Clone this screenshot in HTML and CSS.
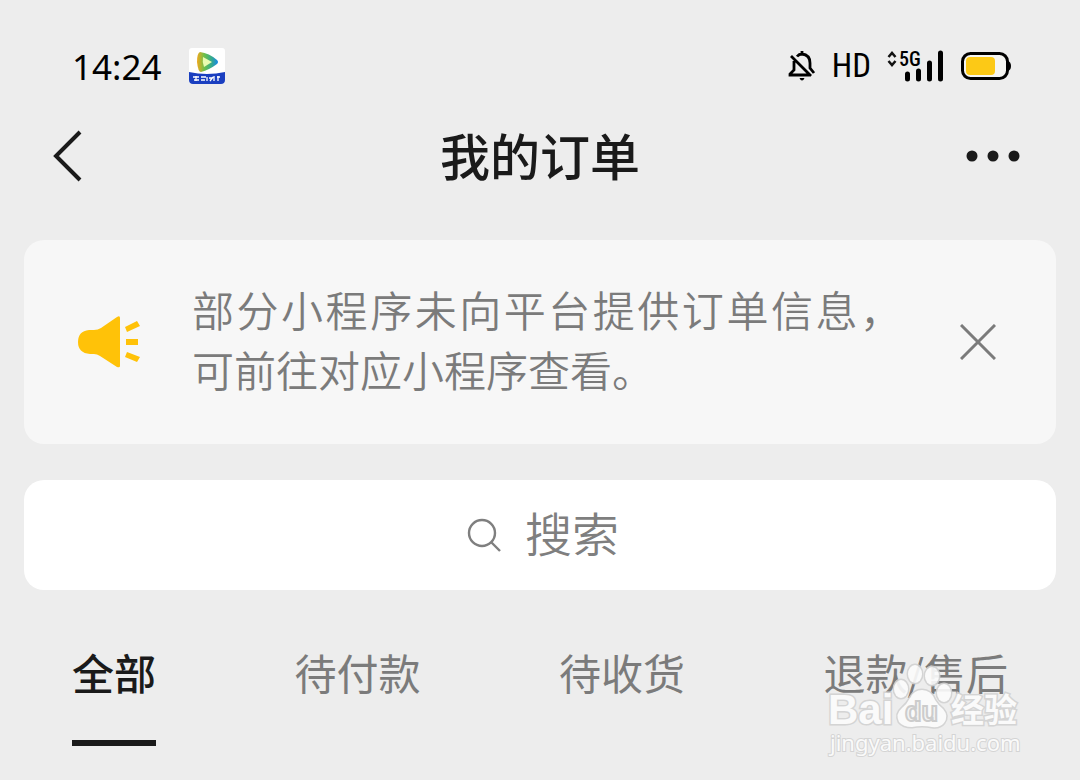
FILE: index.html
```html
<!DOCTYPE html>
<html lang="zh-CN">
<head>
    <meta charset="UTF-8">
    <meta name="viewport" content="width=device-width, initial-scale=1.0">
    <title>我的订单</title>
    <link rel="stylesheet" href="styles.css">
</head>
<body>

<!-- Status bar -->
<div class="status-bar">
    <span class="time">14:24</span>
    <svg class="app-icon" width="36" height="36" viewBox="0 0 36 36">
        <defs>
            <linearGradient id="play-fill" x1="0" y1="0" x2="1" y2="0">
                <stop offset="0" stop-color="#f2a81d"/>
                <stop offset="0.35" stop-color="#6cc04a"/>
                <stop offset="0.7" stop-color="#35a98f"/>
                <stop offset="1" stop-color="#1688e8"/>
            </linearGradient>
        </defs>
        <rect width="36" height="36" rx="3" fill="#fff"/>
        <path d="M0 24q18 4 36 0v8q0 4-4 4H4q-4 0-4-4z" fill="#1a3fc0"/>
        <path d="M11 4q9 1 17 8 2 2 0 4-8 6-16 8-3 0-4-10 0-9 3-10z" fill="url(#play-fill)"/>
        <path d="M14 9l9 5-8 5q-2-5-1-10z" fill="#e9fbb0"/>
        <path d="M4 29h6M5 32h5M7 28v5M12 29h5M12 32h4M18 29v4M20 30h3M21 33l3-4M25 28v5M28 29h3M29 28v5" stroke="#fff" stroke-width="1.3"/>
    </svg>
    <div class="status-icons">
        <svg class="bell" width="28" height="32" viewBox="0 0 28 32" fill="none" stroke="#000" stroke-width="2.8">
            <path d="M9 6.500q2-2.500 5-2.500 8 1 8 9v5l4 5M6 11v9l-4 4v1h19M14 1v3M3 6l20 20"/>
            <path d="M11.500 28h5q-1 2.500-2.500 2.500T11.500 28z" fill="#000" stroke="none"/>
        </svg>
        <span class="hd">HD</span>
        <div class="signal">
            <svg width="56" height="32" viewBox="0 0 56 32">
                <path d="M1.500 7l3.500-4 3.500 4M1.500 11l3.500 4 3.500-4" fill="none" stroke="#111" stroke-width="2.500"/>
                <path d="M20.500 24v5M31.500 21v8M42.500 13v16M53.500 3v26" stroke="#000" stroke-width="5" stroke-linecap="round"/>
            </svg>
            <span class="network">5G</span>
        </div>
        <svg class="battery" width="50" height="28" viewBox="0 0 50 28">
            <rect x="1.500" y="1.500" width="45" height="25" rx="8" fill="#f5f5f2" stroke="#000" stroke-width="3"/>
            <path d="M47 9q3 1 3 5t-3 5z" fill="#000"/>
            <rect x="5" y="5" width="29" height="18" rx="4" fill="#fcc916"/>
        </svg>
    </div>
</div>

<!-- Title bar -->
<header class="title-bar">
    <button class="icon-button back" type="button" aria-label="返回">
        <svg width="30" height="54" viewBox="0 0 30 54" fill="none" stroke="#1a1a1a" stroke-width="4">
            <path d="M28 3L4 27l24 24"/>
        </svg>
    </button>
    <h1>我的订单</h1>
    <button class="icon-button" type="button" aria-label="更多">
        <svg width="54" height="12" viewBox="0 0 54 12" fill="#1a1a1a">
            <circle cx="6" cy="6" r="5.500"/>
            <circle cx="27" cy="6" r="5.500"/>
            <circle cx="48" cy="6" r="5.500"/>
        </svg>
    </button>
</header>

<main>
    <section class="notice">
        <svg class="horn" width="62" height="52" viewBox="0 0 62 52" fill="#ffc208">
            <path d="M11 14h5q4 0 7-2L39 1q3-2 3 1v48q0 2-3 1L22 40q-3-2-6-2h-4Q0 37 0 26t11-12z"/>
            <path d="M47 11l12-6 3 5-13 6zM48 23h12v6H48zM49 36l13 5-3 5-12-5z"/>
        </svg>
        <p>部分小程序未向平台提供订单信息，可前往对应小程序查看。</p>
        <button class="icon-button" type="button" aria-label="关闭">
            <svg width="36" height="36" viewBox="0 0 36 36" fill="none" stroke="#7b7b7b" stroke-width="3">
                <path d="M1 1l34 34M35 1L1 35"/>
            </svg>
        </button>
    </section>

    <label class="search">
        <svg width="34" height="34" viewBox="0 0 34 34" fill="none" stroke="#7f7f7f" stroke-width="2.400">
            <circle cx="15" cy="15" r="13"/>
            <path d="M24 24l9 9"/>
        </svg>
        <input type="text" placeholder="搜索" aria-label="搜索">
    </label>

    <nav class="tabs">
        <button class="tab active" type="button">全部</button>
        <button class="tab" type="button">待付款</button>
        <button class="tab" type="button">待收货</button>
        <button class="tab" type="button">退款/售后</button>
    </nav>
</main>

<!-- Watermark -->
<svg class="watermark" width="200" height="100" viewBox="0 0 200 100">
    <g class="mark">
        <text class="mark-name" x="4" y="64">Bai</text>
        <ellipse cx="77" cy="29" rx="7" ry="9"/>
        <ellipse cx="91" cy="14" rx="7" ry="9"/>
        <ellipse cx="108" cy="16" rx="7" ry="9"/>
        <ellipse cx="120" cy="33" rx="7" ry="9"/>
        <path d="M98 30q9 0 13 10 3 5 8 9 6 7 1 14-4 5-12 4-10-2-20 0-9 0-13-5-4-8 3-14 5-4 8-10 4-8 12-8z"/>
        <text class="mark-cjk" x="127" y="62">经验</text>
        <text class="mark-url" x="6" y="91">jingyan.baidu.com</text>
    </g>
    <text class="mark-du" x="81" y="61">du</text>
</svg>

</body>
</html>
```
FILE: styles.css
```css
body {
    background-color: #ededed;
    margin: 0;
    font-family: 'Noto Sans CJK SC', sans-serif;
    color: #1a1a1a;
}

svg {
    display: block;
    flex-shrink: 0;
}

button {
    padding: 0;
    border: none;
    background: none;
    font-family: inherit;
    color: inherit;
    cursor: pointer;
}

.status-bar {
    display: flex;
    align-items: center;
    gap: 28px;
    height: 60px;
    padding: 36px 69px 0 72px;
    color: #000;
}

.time {
    font-family: 'Noto Sans', sans-serif;
    font-size: 35px;
}

.status-icons {
    display: flex;
    align-items: center;
    gap: 16px;
    margin-left: auto;
}

.hd {
    font-family: 'Roboto Condensed', Roboto, sans-serif;
    font-size: 33px;
    line-height: 36px;
}

.signal {
    position: relative;
    margin-right: 2px;
}

.network {
    position: absolute;
    top: 0;
    left: 12px;
    font-family: 'Roboto Condensed', Roboto, sans-serif;
    font-size: 20px;
    font-weight: 500;
    line-height: 18px;
}

.title-bar {
    display: flex;
    align-items: center;
    height: 120px;
    padding: 0 60px 0 52px;
}

.icon-button {
    display: flex;
}

.back {
    width: 62px;
}

.title-bar h1 {
    flex: 1;
    margin: 0;
    padding-bottom: 4px;
    font-size: 50px;
    font-weight: 500;
    text-align: center;
}

main {
    padding: 24px 24px 0;
}

.notice {
    display: flex;
    align-items: center;
    gap: 52px;
    padding: 39px 60px 39px 54px;
    border-radius: 20px;
    background-color: #f7f7f7;
}

.notice p {
    flex: 1;
    margin: 0;
    padding: 0 6px 6px 0;
    font-size: 42px;
    font-weight: 350;
    line-height: 60px;
    text-align: justify;
    color: #7b7b7b;
}

.search {
    display: flex;
    align-items: center;
    justify-content: center;
    gap: 24px;
    height: 110px;
    margin-top: 36px;
    padding-left: 6px;
    border-radius: 20px;
    background-color: #fff;
}

.search input {
    width: 2em;
    padding: 0 0 8px;
    border: none;
    outline: none;
    background: none;
    font-family: inherit;
    font-size: 47px;
    font-weight: 350;
    color: #1a1a1a;
}

.search input::placeholder {
    color: #7f7f7f;
}

.tabs {
    display: flex;
    justify-content: space-between;
    margin-top: 48px;
    padding: 0 48px;
}

.tab {
    height: 108px;
    padding-bottom: 36px;
    border-bottom: 6px solid transparent;
    font-size: 42px;
    color: #7b7b7b;
}

.tab.active {
    border-color: #1a1a1a;
    font-weight: 500;
    color: #1a1a1a;
}

/* Lies over the last tab */
.watermark {
    position: absolute;
    right: 56px;
    top: 660px;
    pointer-events: none;
}

.mark {
    fill: #fcfcfc;
    stroke: #d2d2d2;
    stroke-width: 3px;
    paint-order: stroke;
    opacity: 0.9;
}

.mark-name {
    font: bold 42px 'Liberation Sans', sans-serif;
}

.mark-cjk {
    font: bold 33px 'Noto Sans CJK SC', sans-serif;
}

.mark-url {
    font: 22px 'Noto Sans', sans-serif;
    stroke-width: 2px;
}

.mark-du {
    font: bold 27px 'Liberation Sans', sans-serif;
    fill: #f4f4f4;
    stroke: #cccccc;
    stroke-width: 2px;
}
```
